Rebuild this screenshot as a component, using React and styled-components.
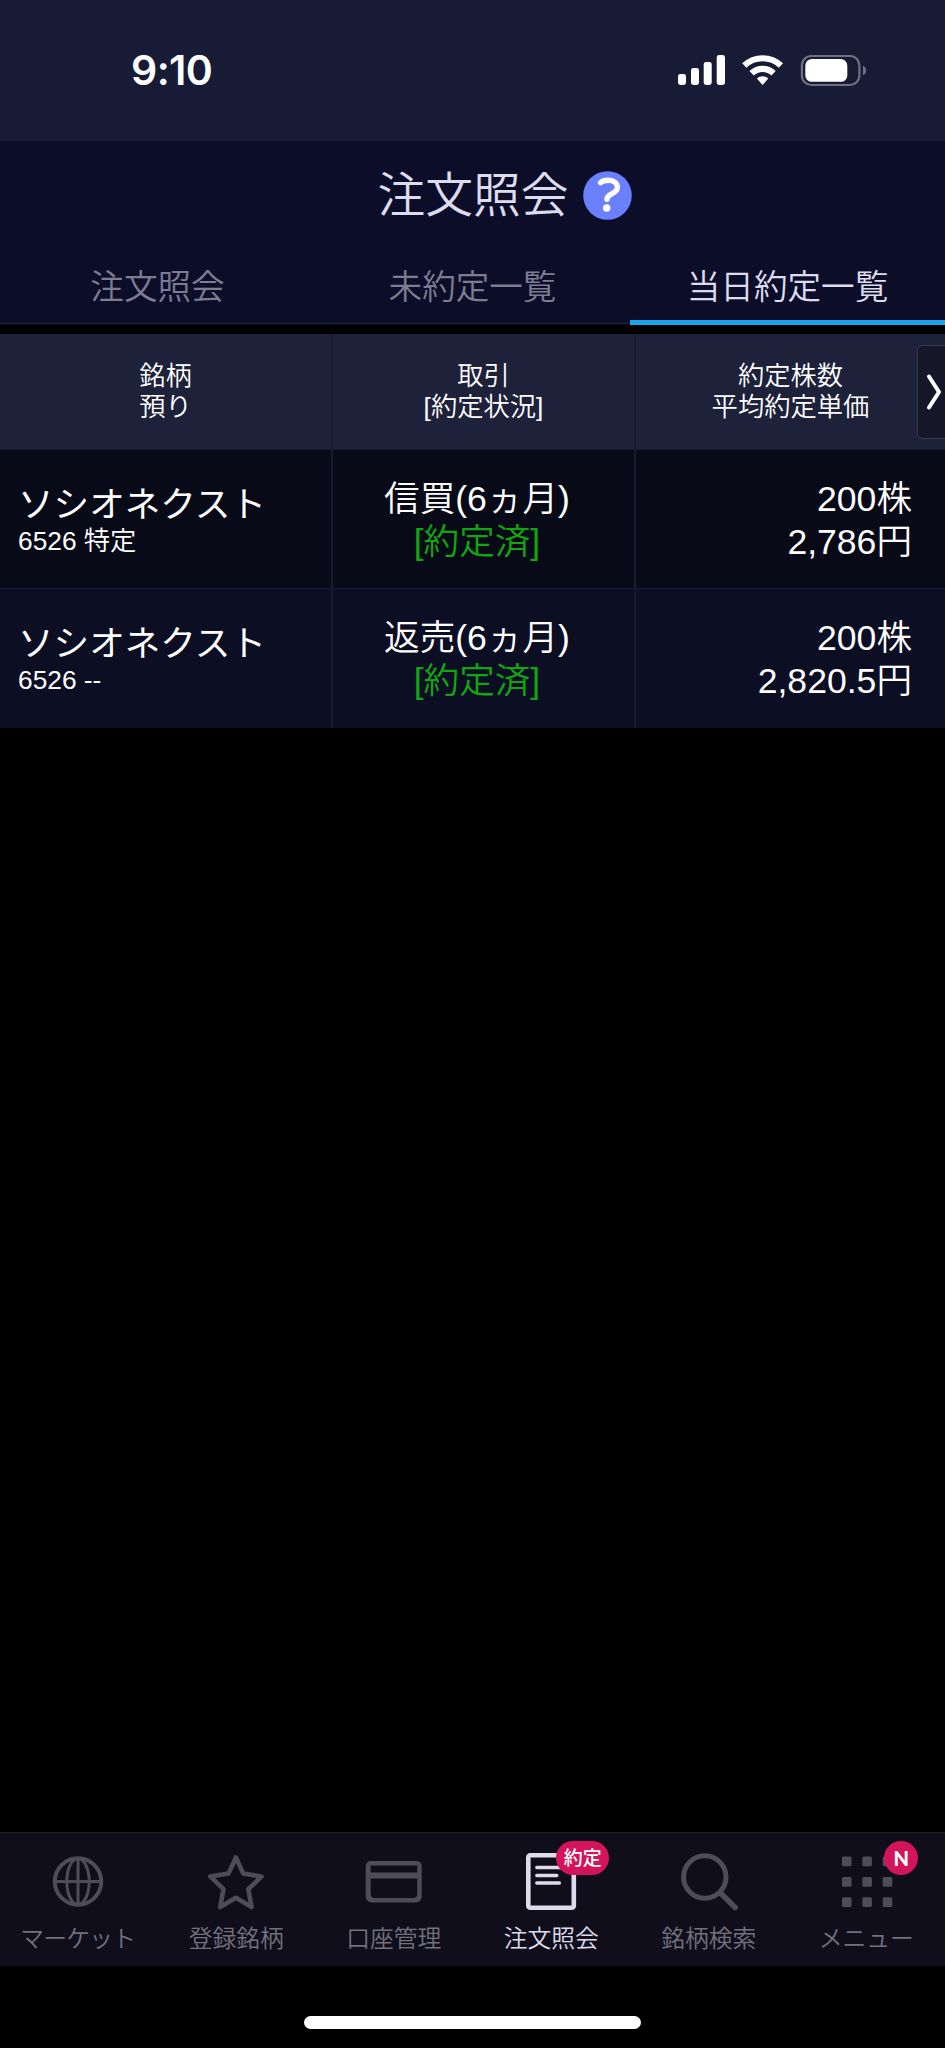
import React from 'react';
import styled, {createGlobalStyle} from 'styled-components';

const jp = `"Noto Sans CJK JP", sans-serif`;
const mixed = `"Liberation Sans", "Noto Sans CJK JP", sans-serif`;

const tabs = ['注文照会', '未約定一覧', '当日約定一覧'];

const columns = [
    ['銘柄', '預り'],
    ['取引', '[約定状況]'],
    ['約定株数', '平均約定単価'],
];

const orders = [
    {name: 'ソシオネクスト', code: '6526 特定', type: '信買(6ヵ月)', state: '[約定済]', amount: '200株', price: '2,786円'},
    {name: 'ソシオネクスト', code: '6526 --', type: '返売(6ヵ月)', state: '[約定済]', amount: '200株', price: '2,820.5円'},
];

const GlobeIcon = () => (
    <NavSvg viewBox="0 0 60 60">
        <g fill="none" stroke="currentColor" strokeWidth="3">
            <circle cx="29" cy="30.5" r="23.2" strokeWidth="4" />
            <ellipse cx="29" cy="30.5" rx="11.2" ry="23" />
            <path d="M29 7v47M6 30.5h46" />
        </g>
    </NavSvg>
);

const StarIcon = () => (
    <NavSvg viewBox="0 0 60 60">
        <path
            d="M29.9 6.5L37.3 22.6L55.5 25.4L42.3 38.2L45.6 56L29.9 46.8L14.2 56L17.5 38.2L4.3 25.4L22.5 22.6Z"
            fill="none" stroke="currentColor" strokeWidth="4.6" strokeLinejoin="round"
        />
    </NavSvg>
);

const CardIcon = () => (
    <NavSvg viewBox="0 0 60 60">
        <path
            d="M5 10h46a5 5 0 0 1 5 5v30.5a6 6 0 0 1-6 6h-44a6 6 0 0 1-6-6v-30.5a5 5 0 0 1 5-5zM5 14.6v6.8h46.5v-6.8zM5 27.5v15.5a4 4 0 0 0 4 4h38.5a4 4 0 0 0 4-4v-15.5z"
            fill="currentColor" fillRule="evenodd" transform="translate(1.7 0)"
        />
    </NavSvg>
);

const DocIcon = () => (
    <NavSvg viewBox="0 0 60 60">
        <rect x="7.3" y="4.3" width="45.5" height="52.4" rx="2" fill="none" stroke="currentColor" strokeWidth="4.6" />
        <path d="M15.8 16.5h24M15.8 24.5h20M15.8 32h22.6" stroke="currentColor" strokeWidth="3.4" strokeLinecap="round" />
    </NavSvg>
);

const SearchIcon = () => (
    <NavSvg viewBox="0 0 60 60">
        <circle cx="25.8" cy="26" r="21.2" fill="none" stroke="currentColor" strokeWidth="5" />
        <path d="M41 41.5L56.2 56.5" stroke="currentColor" strokeWidth="5.4" strokeLinecap="round" />
    </NavSvg>
);

const GridIcon = () => (
    <NavSvg viewBox="0 0 60 60">
        {[5.5, 26, 46.3].map((y) => [6, 26.3, 46.7].map((x) => (
            <rect key={`${x}-${y}`} x={x} y={y} width="9.6" height="9.8" rx="1.5" fill="currentColor" />
        )))}
    </NavSvg>
);

const navItems = [
    {label: 'マーケット', icon: GlobeIcon, tight: true},
    {label: '登録銘柄', icon: StarIcon},
    {label: '口座管理', icon: CardIcon},
    {label: '注文照会', icon: DocIcon, active: true, badge: '約定'},
    {label: '銘柄検索', icon: SearchIcon},
    {label: 'メニュー', icon: GridIcon, badge: 'N'},
];

const StatusIcons = () => (
    <StatusSvg viewBox="0 0 190 32">
        <g fill="#fff">
            <rect x="0" y="19" width="8" height="11" rx="2.4" />
            <rect x="13" y="13" width="8" height="17" rx="2.4" />
            <rect x="25.7" y="7" width="8" height="23" rx="2.4" />
            <rect x="38.7" y="0" width="8.3" height="30" rx="2.4" />
        </g>
        <g fill="none" stroke="#fff" strokeWidth="6.2">
            <path d="M66.3 10.6A26.5 26.5 0 0 1 102.9 10.6" />
            <path d="M73.6 18.2A16 16 0 0 1 95.6 18.2" />
        </g>
        <path d="M78.9 23.6A8.4 8.4 0 0 1 90.3 23.6L84.6 30Z" fill="#fff" />
        <rect x="123.9" y="1" width="57.5" height="29" rx="9.5" fill="none" stroke="#6f7081" strokeWidth="2.2" />
        <rect x="127.3" y="4" width="42" height="22.8" rx="6.5" fill="#fff" />
        <path d="M185 10.7c4.2 1.6 4.2 8 0 9.6z" fill="#6f7081" />
    </StatusSvg>
);

const App = () => {
    return (
        <>
        <GlobalStyle />
        <Screen>
            <StatusBar>
                <Clock>9:10</Clock>
                <StatusIcons />
            </StatusBar>

            <Header>
                <TitleRow>
                    <Title>注文照会</Title>
                    <Help viewBox="0 0 49 49">
                        <circle cx="24.5" cy="24.5" r="24.3" fill="#6a80fd" />
                        <path d="M17.6 11.6C20 9.2 23 9.2 25.5 9.2C31 9.2 34.4 12.2 34.4 16.4C34.4 23 24 22.2 24 28.2" fill="none" stroke="#fff" strokeWidth="5.4" strokeLinecap="round" />
                        <circle cx="23.7" cy="37" r="3.8" fill="#fff" />
                    </Help>
                </TitleRow>
                <Tabs>
                    {tabs.map((tab, i) => <Tab key={tab} $active={i === 2}>{tab}</Tab>)}
                </Tabs>
            </Header>

            <Table>
                <HeadRow>
                    {columns.map(([top, bottom]) => (
                        <HeadCell key={top}>
                            <span>{top}</span>
                            <span>{bottom}</span>
                        </HeadCell>
                    ))}
                    <NextButton>
                        <svg width="18" height="38" viewBox="0 0 18 38">
                            <path d="M4 3.5L14 19L4 34.5" fill="none" stroke="#fff" strokeWidth="4" strokeLinecap="round" strokeLinejoin="round" />
                        </svg>
                    </NextButton>
                </HeadRow>
                {orders.map((order, i) => (
                    <Row key={order.type} $alt={i % 2 === 1}>
                        <NameCell>
                            <Name>{order.name}</Name>
                            <Code>{order.code}</Code>
                        </NameCell>
                        <TypeCell>
                            <Value>{order.type}</Value>
                            <State>{order.state}</State>
                        </TypeCell>
                        <PriceCell>
                            <Value>{order.amount}</Value>
                            <Value>{order.price}</Value>
                        </PriceCell>
                    </Row>
                ))}
            </Table>

            <Nav>
                {navItems.map(({label, icon: Icon, active, badge, tight}) => (
                    <NavItem key={label} $active={active}>
                        <IconBox>
                            <Icon />
                            {badge && <Badge $round={badge === 'N'}>{badge}</Badge>}
                        </IconBox>
                        <NavLabel $active={active} $tight={tight}>{label}</NavLabel>
                    </NavItem>
                ))}
            </Nav>
            <HomeArea>
                <HomeBar />
            </HomeArea>
        </Screen>
        </>
    )
}

const GlobalStyle = createGlobalStyle`
    * {
        box-sizing: border-box;
    }
    body {
        margin: 0;
        background: #000;
    }
`;
const Screen = styled.div`
    display: flex;
    flex-direction: column;
    width: 945px;
    height: 2048px;
    overflow: hidden;
    background: #000;
    color: #fff;
    font-family: ${jp};
`;
const StatusBar = styled.div`
    display: flex;
    justify-content: space-between;
    align-items: flex-start;
    height: 141px;
    padding: 55px 77px 0 131px;
    background: #181b35;
`;
const Clock = styled.div`
    font-family: Inter, sans-serif;
    font-size: 41px;
    font-weight: 600;
    line-height: 31px;
    letter-spacing: -0.6px;
`;
const StatusSvg = styled.svg`
    width: 190px;
    height: 32px;
`;
const Header = styled.header`
    height: 184px;
    background: #0c0d28;
`;
const TitleRow = styled.div`
    display: flex;
    justify-content: center;
    align-items: center;
    gap: 14px;
    height: 108px;
    padding-left: 64px;
`;
const Title = styled.h1`
    margin: 0;
    padding-bottom: 7px;
    font-size: 47.8px;
    font-weight: 350;
    line-height: 60px;
    color: #dddcee;
`;
const Help = styled.svg`
    width: 49px;
    height: 49px;
`;
const Tabs = styled.div`
    display: flex;
    height: 76px;
`;
const Tab = styled.div`
    flex: 1;
    display: flex;
    justify-content: center;
    height: ${({$active}) => ($active ? '76px' : '75px')};
    padding-top: 16px;
    border-bottom: ${({$active}) => ($active ? '5px solid #1aa3e8' : '2px solid #191a35')};
    font-size: 33.6px;
    font-weight: 350;
    line-height: 40px;
    color: ${({$active}) => ($active ? '#dddcee' : '#7d7c90')};
`;
const Table = styled.div`
    flex: 1;
    padding-top: 9px;
`;
const HeadRow = styled.div`
    position: relative;
    display: grid;
    grid-template-columns: 333px 303px 309px;
    height: 115px;
    background: #1e213a;
`;
const HeadCell = styled.div`
    display: flex;
    flex-direction: column;
    align-items: center;
    padding-top: 27px;
    border-right: 2px solid #191b34;
    font-family: ${mixed};
    font-size: 26.3px;
    font-weight: 350;
    line-height: 31.3px;
    &:nth-child(3) {
        border-right: 0;
    }
`;
const NextButton = styled.div`
    position: absolute;
    top: 11px;
    right: -6px;
    width: 34px;
    height: 94px;
    padding: 27px 0 0 7px;
    border: 1.5px solid #393b4d;
    border-radius: 6px;
    background: #151728;
`;
const Row = styled.div`
    display: grid;
    grid-template-columns: 333px 303px 309px;
    height: ${({$alt}) => ($alt ? '140px' : '139px')};
    border-top: 1px solid #181a33;
    background: ${({$alt}) => ($alt ? '#0c0e23' : '#080a18')};
`;
const Cell = styled.div`
    display: flex;
    flex-direction: column;
    font-family: ${mixed};
    border-right: 2px solid #181a30;
`;
const NameCell = styled(Cell)`
    padding: 34px 0 0 18px;
`;
const TypeCell = styled(Cell)`
    align-items: center;
    padding: 28px 13px 0 0;
`;
const PriceCell = styled(Cell)`
    align-items: flex-end;
    padding: 28px 33px 0 0;
    border-right: 0;
`;
const Name = styled.div`
    font-size: 35.6px;
    font-weight: 400;
    line-height: 42px;
`;
const Code = styled.div`
    margin-top: -1px;
    font-size: 26.3px;
    font-weight: 350;
    line-height: 32px;
`;
const Value = styled.div`
    font-size: 35.6px;
    font-weight: 350;
    line-height: 42.5px;
`;
const State = styled(Value)`
    color: #12a512;
`;
const Nav = styled.nav`
    display: flex;
    height: 134px;
    border-top: 1px solid #202027;
    background: #100e1b;
`;
const NavItem = styled.div`
    flex: 1;
    display: flex;
    flex-direction: column;
    align-items: center;
    padding-top: 18px;
    color: ${({$active}) => ($active ? '#dddcee' : '#4d4c58')};
`;
const IconBox = styled.div`
    position: relative;
    width: 60px;
    height: 60px;
`;
const NavSvg = styled.svg`
    display: block;
    width: 60px;
    height: 60px;
`;
const Badge = styled.div`
    position: absolute;
    top: -10px;
    left: ${({$round}) => ($round ? '48px' : '35px')};
    width: ${({$round}) => ($round ? '34px' : '53px')};
    height: 34px;
    border-radius: 17px;
    background: #d4145a;
    color: #fff;
    font-family: ${({$round}) => ($round ? 'Lato, sans-serif' : jp)};
    font-size: ${({$round}) => ($round ? '20px' : '19px')};
    font-weight: ${({$round}) => ($round ? 900 : 500)};
    line-height: ${({$round}) => ($round ? '34px' : '32px')};
    text-align: center;
`;
const NavLabel = styled.div`
    margin-top: 12px;
    padding-right: ${({$tight}) => ($tight ? '2px' : '0')};
    font-size: 23.8px;
    font-weight: 350;
    line-height: 28px;
    letter-spacing: ${({$tight}) => ($tight ? '-0.8px' : '0')};
    white-space: nowrap;
    color: ${({$active}) => ($active ? '#dddcee' : '#72717e')};
`;
const HomeArea = styled.div`
    display: flex;
    justify-content: center;
    height: 82px;
    padding-top: 50px;
`;
const HomeBar = styled.div`
    width: 337px;
    height: 13px;
    border-radius: 7px;
    background: #fff;
`;

export default App;
